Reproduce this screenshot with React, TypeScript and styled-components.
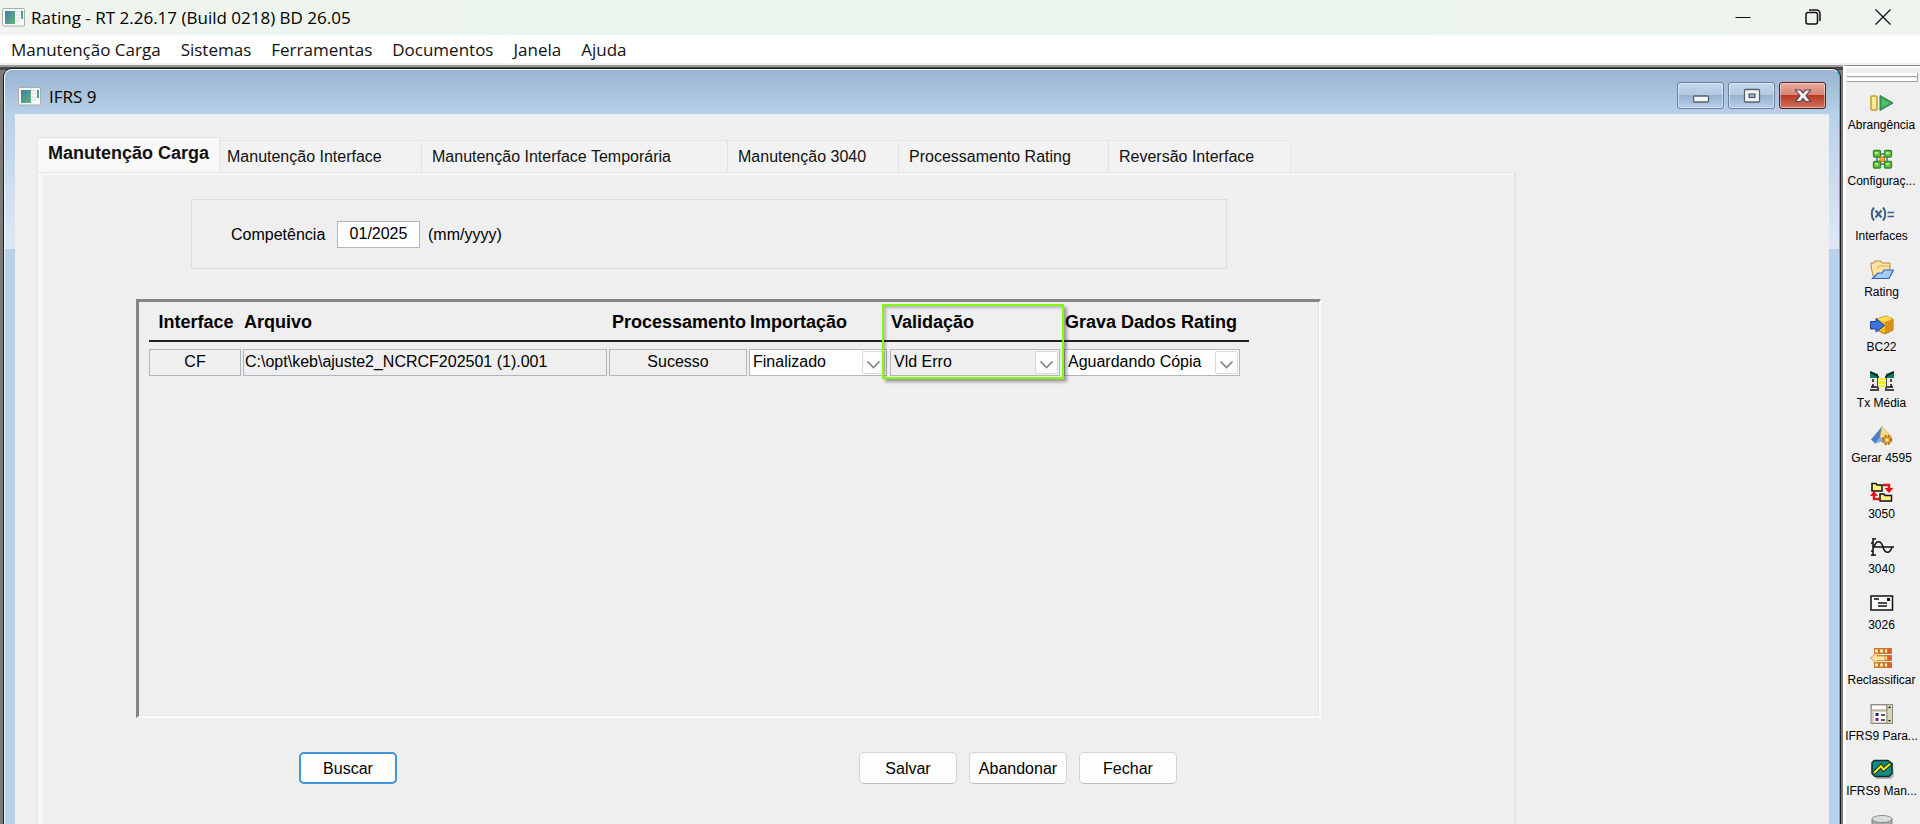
import React, { useState } from "react";
import styled, { createGlobalStyle, css } from "styled-components";

const uiFont = `"Open Sans", "Noto Sans", sans-serif`;
const formFont = `"Liberation Sans", Arial, sans-serif`;

const GlobalStyle = createGlobalStyle`
  *, *::before, *::after { box-sizing: border-box; }
  body {
    margin: 0;
    overflow: hidden;
    background: #efefef;
    color: #000;
    font-family: ${formFont};
    font-size: 16px;
  }
  button, input, select { font: inherit; color: inherit; }
`;

const Shell = styled.div`
  display: flex;
  flex-direction: column;
  height: 100vh;
  overflow: hidden;
`;

/* ---------- outer window ---------- */

const TitleBar = styled.header`
  display: flex;
  align-items: center;
  flex: none;
  height: 35px;
  padding: 0 2px;
  background: linear-gradient(90deg, #eff5ee, #eaf5ed 50%, #eff5ee);
`;

const AppTitle = styled.h1`
  flex: 1;
  margin: 0 0 0 5px;
  font: 400 17px/24px ${uiFont};
  white-space: nowrap;
`;

const CaptionButton = styled.button`
  display: grid;
  place-items: center;
  width: 70px;
  height: 35px;
  padding: 0 0 2px;
  border: 0;
  background: transparent;
`;

const MenuBar = styled.nav`
  display: flex;
  flex: none;
  gap: 20px;
  height: 28px;
  padding: 1px 11px 0;
  background: #fff;
`;

const MenuLink = styled.a`
  color: #111;
  font: 400 17px/28px ${uiFont};
  text-decoration: none;
  white-space: nowrap;
`;

const Workspace = styled.div`
  display: flex;
  flex: 1;
  min-height: 0;
  border-top: 2px solid #f0f0f0;
`;

const MdiArea = styled.div`
  display: flex;
  flex: 1;
  min-width: 0;
  padding: 4px 3px 0 4px;
  background: #7a7a7a;
  box-shadow: inset 0 2px #9a9a9a, inset 0 5px #4a4a4a;
`;

/* ---------- inner window ---------- */

const MdiWindow = styled.section`
  display: flex;
  flex-direction: column;
  flex: 1;
  min-width: 0;
  padding: 0 10px;
  border: 1px solid #f4f8fc;
  border-right-color: #2ec4e6;
  border-bottom: 0;
  border-radius: 8px 8px 0 0;
  background:
    linear-gradient(#b9d1ea, #dde9f5) 0 45px / 100% 134px no-repeat,
    linear-gradient(#99b4d1, #b9d1ea) 0 0 / 100% 45px no-repeat,
    #b9d1ea;
  box-shadow: 0 0 0 1px #1c1c1c;
`;

const MdiTitle = styled.header`
  display: flex;
  align-items: center;
  flex: none;
  gap: 4px;
  height: 44px;
  padding: 9px 3px 0;
`;

const MdiName = styled.h2`
  flex: 1;
  margin: 0 0 0 3px;
  font: 400 17px/24px ${uiFont};
`;

const MdiButton = styled.button<{ $danger?: boolean }>`
  display: grid;
  place-items: center;
  width: 47px;
  height: 27px;
  margin-bottom: 2px;
  padding: 0;
  border: 1px solid ${(p) => (p.$danger ? "#5a1a20" : "#6a82a0")};
  border-radius: 3px;
  background: ${(p) =>
    p.$danger
      ? "linear-gradient(#e9a99d, #d98576 46%, #b93a22 50%, #d07360)"
      : "linear-gradient(#c3d6ea, #b4cae2 46%, #98b3d0 50%, #b5cee8)"};
  box-shadow: inset 0 0 0 1px rgba(255, 255, 255, 0.45);
`;

const Client = styled.div`
  flex: 1;
  min-height: 0;
  padding: 22px 22px 0;
  border-top: 1px solid #dfeaf5;
  background: #efefef;
`;

const TabStrip = styled.div`
  display: flex;
  align-items: flex-end;
  max-width: 1479px;
  height: 35px;
`;

const Tab = styled.button<{ $width: number; $active: boolean }>`
  flex: none;
  width: ${(p) => p.$width}px;
  height: 32px;
  padding: 0 0 0 10px;
  border: 1px solid #e4e4e4;
  border-width: 1px 1px 0 0;
  background: #f2f2f2;
  color: #111;
  line-height: 30px;
  text-align: left;
  white-space: nowrap;
  &:nth-child(2) { padding-left: 7px; }
  ${(p) =>
    p.$active &&
    css`
      height: 35px;
      padding-bottom: 5px;
      border-left-width: 1px;
      background: #f9f9f9;
      font-size: 18px;
      font-weight: 700;
    `}
`;

const TabPanel = styled.div`
  max-width: 1479px;
  height: 100%;
  padding-top: 26px;
  border: 1px solid #e4e4e4;
  border-width: 1px 2px 0 1px;
  background: #efefef;
  box-shadow: inset 4px 2px #f8f8f8;
`;

const FilterBox = styled.div`
  display: flex;
  align-items: center;
  width: 1036px;
  height: 70px;
  margin-left: 153px;
  padding: 1px 0 0 39px;
  border: 1px solid #dcdcdc;
`;

const FilterLabel = styled.label`
  width: 106px;
`;

const FilterInput = styled.input`
  width: 83px;
  height: 27px;
  margin-right: 8px;
  padding: 0 0 1px;
  border: 1px solid #b4b4bc;
  background: #fff;
  text-align: center;
`;

/* ---------- data grid ---------- */

const GridBox = styled.div`
  width: 1185px;
  height: 419px;
  margin: 30px 0 34px 98px;
  padding: 2px 0 0 10px;
  border: solid;
  border-width: 3px 2px 2px 3px;
  border-color: #858585 #fafafa #fcfcfc #858585;
  box-shadow: inset -1px -1px #e6e6e6;
`;

const Grid = styled.table`
  width: 1100px;
  table-layout: fixed;
  border-collapse: separate;
  border-spacing: 0;
`;

const HeadCell = styled.th<{ $center?: boolean }>`
  position: relative;
  height: 38px;
  padding: 0 0 0 ${(p) => (p.$center ? 0 : 1)}px;
  border-bottom: 2px solid #222;
  font-size: 18px;
  font-weight: 700;
  text-align: ${(p) => (p.$center ? "center" : "left")};
  white-space: nowrap;
`;

const Marker = styled.span`
  position: absolute;
  z-index: 2;
  top: 0;
  left: -8px;
  width: 182px;
  height: 75px;
  border: 2px solid #7fff00;
  box-shadow: 3px 3px 3px rgba(0, 0, 0, 0.35), inset 2px 2px 3px rgba(0, 0, 0, 0.25);
  pointer-events: none;
`;

const BodyCell = styled.td`
  padding: 7px 2px 0 0;
`;

const CellInput = styled.input<{ $center?: boolean }>`
  display: block;
  width: 100%;
  height: 27px;
  padding: 0 1px 2px;
  border: 1px solid #b4b4bc;
  background: #efefef;
  text-align: ${(p) => (p.$center ? "center" : "left")};
`;

const Combo = styled.div<{ $width: number }>`
  position: relative;
  width: ${(p) => p.$width}px;
`;

const ComboSelect = styled.select<{ $muted?: boolean }>`
  display: block;
  width: 100%;
  height: 27px;
  padding: 0 24px 2px 3px;
  appearance: none;
  border: 1px solid #b4b4bc;
  border-radius: 0;
  background: ${(p) => (p.$muted ? "#efefef" : "#fff")};
`;

const ComboArrow = styled.span`
  position: absolute;
  top: 2px;
  right: 2px;
  display: grid;
  place-items: center;
  width: 23px;
  height: 23px;
  padding-top: 4px;
  border: 1px solid #dadada;
  border-radius: 2px;
  background: #fdfdfd;
  pointer-events: none;
`;

/* ---------- form actions ---------- */

const Actions = styled.div`
  display: flex;
  gap: 12px;
  margin-left: 261px;
`;

const ActionButton = styled.button<{ $primary?: boolean }>`
  width: 98px;
  height: 32px;
  margin-right: ${(p) => (p.$primary ? 450 : 0)}px;
  padding: 2px 0 0;
  border: 1px solid #d4d4d4;
  border-bottom-color: #bdbdbd;
  border-radius: 5px;
  background: #fdfdfd;
  ${(p) =>
    p.$primary &&
    css`
      border: 2px solid #3f96db;
    `}
`;

/* ---------- tool bar ---------- */

const ToolBar = styled.aside`
  flex: none;
  width: 77px;
  overflow: hidden;
  border-top: 1px solid #8c8c8c;
  border-left: 3px solid #fff;
  background: #efefef;
  box-shadow: inset 0 2px #fff;
`;

const Grip = styled.div`
  height: 9px;
  margin: 7px 2px 0 1px;
  border: solid #a2a2a2;
  border-width: 0 1px 1px 0;
  background: linear-gradient(#fff 3px, #a2a2a2 3px, #a2a2a2 4px, #efefef 4px, #efefef 5px, #fff 5px);
`;

const ToolList = styled.ul`
  margin: 5px 3px 0 0;
  padding: 0;
  list-style: none;
`;

const ToolItem = styled.li`
  height: 56px;
  &:nth-child(even) { height: 55px; }
`;

const ToolButton = styled.button`
  display: flex;
  flex-direction: column;
  align-items: center;
  gap: 4px;
  width: 100%;
  padding: 6px 0 0;
  border: 0;
  background: transparent;
  font-size: 12px;
  line-height: 16px;
  white-space: nowrap;
`;

const AppIcon = () => (
  <svg width="24" height="19" viewBox="0 0 24 19" aria-hidden="true">
    <defs>
      <linearGradient id="appPane" x1="0" y1="0" x2="1" y2="1">
        <stop offset="0" stopColor="#3f7ca8" />
        <stop offset="1" stopColor="#5fb873" />
      </linearGradient>
    </defs>
    <rect x="0.5" y="0.5" width="22" height="17.5" rx="1" fill="#fafafa" stroke="#a9adb2" />
    <rect x="3" y="3" width="10" height="13" fill="url(#appPane)" />
    <path d="M14 4h4M14 7h4M14 10h4M14 13h4" stroke="#d5dadd" />
    <rect x="19" y="3" width="2" height="8" fill="url(#appPane)" />
  </svg>
);

const toolIcons: Record<string, React.ReactNode> = {
  scope: (
    <>
      <rect x="1" y="3" width="6" height="14" rx="1" fill="#fbe9a0" stroke="#c79a2c" strokeWidth="1.5" />
      <path d="M10 2.5 23 10 10 17.5z" fill="#3fa85a" stroke="#267a43" />
      <path d="M12 6v8l7-4z" fill="#58bd6e" />
    </>
  ),
  config: (
    <>
      <path d="M7 5h10v10H7zM7 5l10 10M17 5 7 15" fill="none" stroke="#3d6da0" strokeWidth="1.5" />
      {[[3, 1], [14, 1], [3, 12], [14, 12]].map(([x, y]) => (
        <g key={`${x}-${y}`}>
          <rect x={x + 0.5} y={y + 0.5} width="7" height="6.5" rx="1" fill="#6cc43e" stroke="#2f8a2c" strokeWidth="1.3" />
          <rect x={x + 2} y={y + 2} width="3" height="2" fill="#b4ec86" />
        </g>
      ))}
      <rect x="10" y="8" width="4.5" height="4.5" fill="#f7b733" stroke="#b77412" />
    </>
  ),
  variable: (
    <g fill="none" stroke="#3f5f86" strokeWidth="2">
      <path d="M4 3.5c-3 3-3 10 0 13M13 3.5c3 3 3 10 0 13M5.500 6.500l6 7M11.500 6.500l-6 7" />
      <path d="M17.500 8.500H24M17.500 12.500H24" strokeWidth="1.5" />
    </g>
  ),
  folder: (
    <>
      <path d="M1 3h3l1-2h6l1 2h8v13H3L1 6z" fill="#fbe3a4" stroke="#b98b3e" />
      <path d="M20 6H9l-2 3" fill="none" stroke="#d4ab5c" />
      <path d="M2.500 18.500 8 13h4l2-3h9.500L19 18.500z" fill="#a3ccfb" stroke="#3560b8" strokeWidth="1.2" />
    </>
  ),
  box: (
    <>
      <path d="M7 4 16 1l7 3v11l-8 4-8-4z" fill="#f6b91e" stroke="#a96c10" />
      <path d="M7 4 16 1l7 3-8 3z" fill="#ffe04a" />
      <path d="M15 7l8-3v11l-8 4z" fill="#d88f17" />
      <path d="M0.500 6.500H6V3.500l8.500 7L6 17v-3H0.500z" fill="#3b74e0" stroke="#1d3f93" />
    </>
  ),
  rates: (
    <>
      <path d="M0 0l8 3v4H0zM24 0l-8 3v4h8z" fill="#087c6c" />
      <path d="M0 1l8 4M24 1l-8 4M3 8v3M3 13v3M21 8v3M21 13v3M8 5v13M16 5v13M0 19h9M15 19h9M1 16h6M17 16h6" fill="none" stroke="#111" strokeWidth="1.5" />
      <rect x="8" y="7" width="8" height="9" fill="#f5ef2a" />
      <path d="M8 9.500h8M8 13.500h8" stroke="#fff" strokeWidth="1.2" />
    </>
  ),
  generate: (
    <>
      <path d="M12 0.500 1 13.500l4 4 9-3z" fill="#4f80c2" />
      <path d="M12 0.500 22 11l-6 5-6-5z" fill="#f5d98a" stroke="#c8a85a" strokeWidth="0.500" />
      <path d="M10 11l4 3-9 3.500z" fill="#86aee0" />
      <circle cx="17" cy="14" r="4" fill="#e3a33a" stroke="#b4771f" strokeWidth="2.500" strokeDasharray="2 1.200" />
      <circle cx="17" cy="14" r="1.500" fill="#fff2cc" />
    </>
  ),
  exchange: (
    <>
      <path d="M2 1.500h4l1 1.500h5v6H2z" fill="#fff27a" stroke="#111" strokeWidth="1.500" />
      <path d="M10 12h4l1 1.500h6.500v5.500H10z" fill="#fff27a" stroke="#111" strokeWidth="1.500" />
      <path d="M13 3h6v4M9 17H4v-4" fill="none" stroke="#e31515" strokeWidth="2.500" />
      <path d="M14.500 6h9L19 11zM0 14h8L4 9z" fill="#e31515" />
    </>
  ),
  wave: (
    <g fill="none" stroke="#111" strokeWidth="1.500">
      <path d="M3 1v18M3 2h3M1 6h2M1 14h2M1 18h5M3 10h21" />
      <path d="M4 10C6 3 11 3 13 10s7 7 9 0" />
    </g>
  ),
  envelope: (
    <>
      <rect x="1" y="3" width="21.500" height="14" fill="#fafafa" stroke="#111" strokeWidth="1.500" />
      <path d="M4 6h5M8 10h9M8 13h9" stroke="#111" strokeWidth="1.500" />
      <rect x="17" y="5" width="3" height="3" fill="#111" />
    </>
  ),
  reclass: (
    <>
      {[0, 7, 14].map((y) => (
        <g key={y}>
          <rect x="4" y={y} width="18" height="6" fill="#c87a28" />
          <path d={`M5 ${y + 3}h3M10 ${y + 3}h3M15 ${y + 3}h2`} stroke="#fbe6b4" strokeWidth="3" />
          <rect x="18" y={y + 1} width="3" height="4" fill="#e0572a" />
        </g>
      ))}
      <path d="M0.500 10 7 4.500V8h8v4.500H7V16z" fill="#ffe2a3" stroke="#d99a3c" />
    </>
  ),
  params: (
    <>
      <rect x="1" y="0.500" width="21.500" height="19" fill="#d6d3b8" stroke="#8b8b7c" />
      <rect x="1.500" y="1" width="15" height="5" fill="#fff" stroke="#99998a" />
      <rect x="4" y="8" width="12" height="10" fill="#fff" />
      <path d="M17 1v18" stroke="#8b8b7c" />
      <path d="m18 4 1.500-2L21 4zM18 16l1.500 2 1.500-2z" fill="#222" />
      <rect x="5.500" y="9" width="3" height="3" fill="#1c1c9c" />
      <rect x="5.500" y="14" width="3" height="3" fill="#8b1a8b" />
      <path d="M11 11h4M11 16h4" stroke="#222" strokeWidth="1.500" />
    </>
  ),
  maintenance: (
    <>
      <path d="M6 4h17l1 13-3 3H6z" fill="#b5b5b5" />
      <path d="M4 1.500h14l4 3v10l-3 3H5l-3-3V4z" fill="#128a80" stroke="#0b2f2d" strokeWidth="1.500" />
      <path d="M4 14l7-7 2.500 3.500L20 5" fill="none" stroke="#20300c" strokeWidth="4" />
      <path d="M4 14l7-7 2.500 3.500L20 5" fill="none" stroke="#f8ea1c" strokeWidth="2" />
    </>
  ),
  database: (
    <>
      <path d="M2 4v14c0 3 20 3 20 0V4z" fill="#a9a9a9" stroke="#858585" />
      <ellipse cx="12" cy="4" rx="10" ry="3.500" fill="#d5e2e0" stroke="#8d8d8d" />
      <path d="M8 2l6 4" stroke="#e8bcbc" />
      <path d="M2 10c0 3 20 3 20 0" fill="none" stroke="#dedede" />
    </>
  ),
};

const tools = [
  { icon: "scope", label: "Abrangência" },
  { icon: "config", label: "Configuraç..." },
  { icon: "variable", label: "Interfaces" },
  { icon: "folder", label: "Rating" },
  { icon: "box", label: "BC22" },
  { icon: "rates", label: "Tx Média" },
  { icon: "generate", label: "Gerar 4595" },
  { icon: "exchange", label: "3050" },
  { icon: "wave", label: "3040" },
  { icon: "envelope", label: "3026" },
  { icon: "reclass", label: "Reclassificar" },
  { icon: "params", label: "IFRS9 Para..." },
  { icon: "maintenance", label: "IFRS9 Man..." },
  { icon: "database", label: "" },
];

const menus = ["Manutenção Carga", "Sistemas", "Ferramentas", "Documentos", "Janela", "Ajuda"];

const tabs = [
  { label: "Manutenção Carga", width: 183 },
  { label: "Manutenção Interface", width: 202 },
  { label: "Manutenção Interface Temporária", width: 306 },
  { label: "Manutenção 3040", width: 171 },
  { label: "Processamento Rating", width: 210 },
  { label: "Reversão Interface", width: 182 },
];

type ComboFieldProps = { label: string; value: string; width: number; muted?: boolean };

const ComboField = ({ label, value, width, muted }: ComboFieldProps) => (
  <Combo $width={width}>
    <ComboSelect aria-label={label} defaultValue={value} $muted={muted}>
      <option>{value}</option>
    </ComboSelect>
    <ComboArrow>
      <svg width="15" height="9" viewBox="0 0 15 9" aria-hidden="true">
        <path d="M1.500 1.500l6 6 6-6" fill="none" stroke="#858585" strokeWidth="1.700" />
      </svg>
    </ComboArrow>
  </Combo>
);

export default function App() {
  const [active, setActive] = useState(0);
  const [period, setPeriod] = useState("01/2025");

  return (
    <Shell>
      <GlobalStyle />
      <TitleBar>
        <AppIcon />
        <AppTitle>Rating - RT 2.26.17 (Build 0218) BD 26.05</AppTitle>
        <CaptionButton aria-label="Minimizar">
          <svg width="16" height="16" viewBox="0 0 16 16">
            <path d="M0.500 8.500h15" stroke="#111" />
          </svg>
        </CaptionButton>
        <CaptionButton aria-label="Restaurar">
          <svg width="16" height="16" viewBox="0 0 16 16" fill="none" stroke="#111" strokeWidth="1.500">
            <rect x="1" y="3.500" width="11.500" height="11.500" rx="2" />
            <path d="M4 1h7.500a3.500 3.500 0 0 1 3.500 3.500V12" />
          </svg>
        </CaptionButton>
        <CaptionButton aria-label="Fechar janela">
          <svg width="16" height="16" viewBox="0 0 16 16">
            <path d="M0.500 0.500l15 15M15.500 0.500l-15 15" stroke="#111" strokeWidth="1.300" />
          </svg>
        </CaptionButton>
      </TitleBar>

      <MenuBar>
        {menus.map((m) => (
          <MenuLink key={m} href="#">{m}</MenuLink>
        ))}
      </MenuBar>

      <Workspace>
        <MdiArea>
          <MdiWindow>
            <MdiTitle>
              <AppIcon />
              <MdiName>IFRS 9</MdiName>
              <MdiButton aria-label="Minimizar IFRS 9">
                <svg width="18" height="16" viewBox="0 0 18 16">
                  <rect x="1.500" y="8" width="15" height="6" rx="1" fill="#f6f6f6" stroke="#5a6472" strokeWidth="1.300" />
                </svg>
              </MdiButton>
              <MdiButton aria-label="Maximizar IFRS 9">
                <svg width="18" height="16" viewBox="0 0 18 16">
                  <rect x="1.500" y="1.500" width="15" height="12.500" rx="1" fill="#f6f6f6" stroke="#5a6472" strokeWidth="1.300" />
                  <rect x="6" y="6" width="6" height="3.500" fill="#9db8d5" stroke="#5a6472" strokeWidth="1.300" />
                </svg>
              </MdiButton>
              <MdiButton aria-label="Fechar IFRS 9" $danger>
                <svg width="18" height="16" viewBox="0 0 18 16">
                  <path d="M1.500 2h5L9 5l2.500-3h5l-4.500 5.700 4.500 5.800h-5L9 10.500l-2.500 3h-5L6 7.700z" fill="#f6f6f6" stroke="#5d4650" strokeWidth="1.200" />
                </svg>
              </MdiButton>
            </MdiTitle>

            <Client>
              <TabStrip role="tablist">
                {tabs.map((t, i) => (
                  <Tab
                    key={t.label}
                    role="tab"
                    aria-selected={i === active}
                    $active={i === active}
                    $width={t.width}
                    onClick={() => setActive(i)}
                  >
                    {t.label}
                  </Tab>
                ))}
              </TabStrip>
              <TabPanel role="tabpanel">
                <FilterBox>
                  <FilterLabel htmlFor="period">Competência</FilterLabel>
                  <FilterInput id="period" value={period} onChange={(e) => setPeriod(e.target.value)} />
                  <span>(mm/yyyy)</span>
                </FilterBox>

                <GridBox>
                  <Grid>
                    <colgroup>
                      <col width="94" />
                      <col width="366" />
                      <col width="140" />
                      <col width="141" />
                      <col width="174" />
                      <col width="185" />
                    </colgroup>
                    <thead>
                      <tr>
                        <HeadCell $center>Interface</HeadCell>
                        <HeadCell>Arquivo</HeadCell>
                        <HeadCell $center>Processamento</HeadCell>
                        <HeadCell>Importação</HeadCell>
                        <HeadCell>
                          Validação
                          <Marker />
                        </HeadCell>
                        <HeadCell>Grava Dados Rating</HeadCell>
                      </tr>
                    </thead>
                    <tbody>
                      <tr>
                        <BodyCell>
                          <CellInput aria-label="Interface" readOnly $center value="CF" />
                        </BodyCell>
                        <BodyCell>
                          <CellInput aria-label="Arquivo" readOnly value="C:\opt\keb\ajuste2_NCRCF202501 (1).001" />
                        </BodyCell>
                        <BodyCell>
                          <CellInput aria-label="Processamento" readOnly $center value="Sucesso" />
                        </BodyCell>
                        <BodyCell>
                          <ComboField label="Importação" value="Finalizado" width={138} />
                        </BodyCell>
                        <BodyCell>
                          <ComboField label="Validação" value="Vld Erro" width={170} muted />
                        </BodyCell>
                        <BodyCell>
                          <ComboField label="Grava Dados Rating" value="Aguardando Cópia" width={176} />
                        </BodyCell>
                      </tr>
                    </tbody>
                  </Grid>
                </GridBox>

                <Actions>
                  <ActionButton $primary>Buscar</ActionButton>
                  <ActionButton>Salvar</ActionButton>
                  <ActionButton>Abandonar</ActionButton>
                  <ActionButton>Fechar</ActionButton>
                </Actions>
              </TabPanel>
            </Client>
          </MdiWindow>
        </MdiArea>

        <ToolBar>
          <Grip />
          <ToolList>
            {tools.map((t) => (
              <ToolItem key={t.icon}>
                <ToolButton aria-label={t.label || "Banco de dados"}>
                  <svg width="24" height="20" viewBox="0 0 24 20" aria-hidden="true">
                    {toolIcons[t.icon]}
                  </svg>
                  {t.label}
                </ToolButton>
              </ToolItem>
            ))}
          </ToolList>
        </ToolBar>
      </Workspace>
    </Shell>
  );
}
